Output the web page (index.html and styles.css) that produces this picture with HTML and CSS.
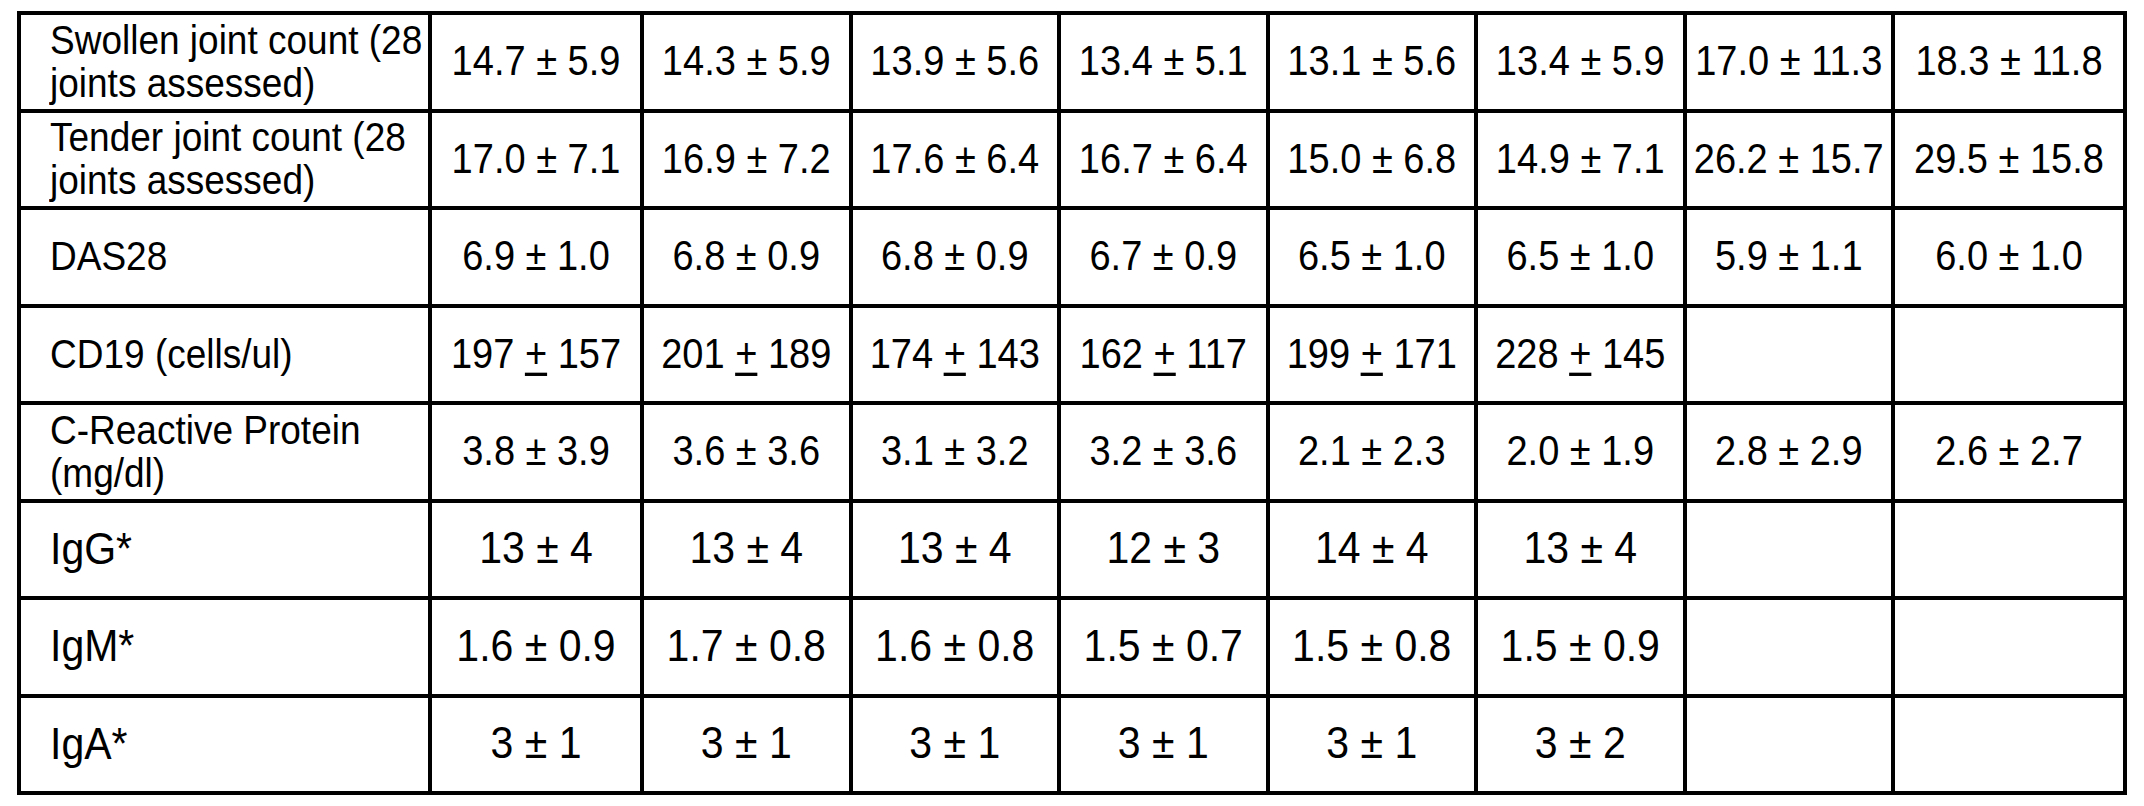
FILE: index.html
```html
<!DOCTYPE html>
<html>
<head>
<meta charset="utf-8">
<link rel="stylesheet" href="styles.css">
</head>
<body>
<div class="grid">
  <div class="cell label"><span class="t">Swollen joint count (28<br>joints assessed)</span></div>
  <div class="cell"><span class="t">14.7 ± 5.9</span></div>
  <div class="cell"><span class="t">14.3 ± 5.9</span></div>
  <div class="cell"><span class="t">13.9 ± 5.6</span></div>
  <div class="cell"><span class="t">13.4 ± 5.1</span></div>
  <div class="cell"><span class="t">13.1 ± 5.6</span></div>
  <div class="cell"><span class="t">13.4 ± 5.9</span></div>
  <div class="cell"><span class="t">17.0 ± 11.3</span></div>
  <div class="cell"><span class="t">18.3 ± 11.8</span></div>

  <div class="cell label"><span class="t">Tender joint count (28<br>joints assessed)</span></div>
  <div class="cell"><span class="t">17.0 ± 7.1</span></div>
  <div class="cell"><span class="t">16.9 ± 7.2</span></div>
  <div class="cell"><span class="t">17.6 ± 6.4</span></div>
  <div class="cell"><span class="t">16.7 ± 6.4</span></div>
  <div class="cell"><span class="t">15.0 ± 6.8</span></div>
  <div class="cell"><span class="t">14.9 ± 7.1</span></div>
  <div class="cell"><span class="t">26.2 ± 15.7</span></div>
  <div class="cell"><span class="t">29.5 ± 15.8</span></div>

  <div class="cell label"><span class="t">DAS28</span></div>
  <div class="cell"><span class="t">6.9 ± 1.0</span></div>
  <div class="cell"><span class="t">6.8 ± 0.9</span></div>
  <div class="cell"><span class="t">6.8 ± 0.9</span></div>
  <div class="cell"><span class="t">6.7 ± 0.9</span></div>
  <div class="cell"><span class="t">6.5 ± 1.0</span></div>
  <div class="cell"><span class="t">6.5 ± 1.0</span></div>
  <div class="cell"><span class="t">5.9 ± 1.1</span></div>
  <div class="cell"><span class="t">6.0 ± 1.0</span></div>

  <div class="cell label"><span class="t">CD19 (cells/ul)</span></div>
  <div class="cell"><span class="t">197 <span class="pm">+</span> 157</span></div>
  <div class="cell"><span class="t">201 <span class="pm">+</span> 189</span></div>
  <div class="cell"><span class="t">174 <span class="pm">+</span> 143</span></div>
  <div class="cell"><span class="t">162 <span class="pm">+</span> 117</span></div>
  <div class="cell"><span class="t">199 <span class="pm">+</span> 171</span></div>
  <div class="cell"><span class="t">228 <span class="pm">+</span> 145</span></div>
  <div class="cell"></div>
  <div class="cell"></div>

  <div class="cell label"><span class="t">C-Reactive Protein<br>(mg/dl)</span></div>
  <div class="cell"><span class="t">3.8 ± 3.9</span></div>
  <div class="cell"><span class="t">3.6 ± 3.6</span></div>
  <div class="cell"><span class="t">3.1 ± 3.2</span></div>
  <div class="cell"><span class="t">3.2 ± 3.6</span></div>
  <div class="cell"><span class="t">2.1 ± 2.3</span></div>
  <div class="cell"><span class="t">2.0 ± 1.9</span></div>
  <div class="cell"><span class="t">2.8 ± 2.9</span></div>
  <div class="cell"><span class="t">2.6 ± 2.7</span></div>

  <div class="cell label big"><span class="t">IgG*</span></div>
  <div class="cell big"><span class="t">13 ± 4</span></div>
  <div class="cell big"><span class="t">13 ± 4</span></div>
  <div class="cell big"><span class="t">13 ± 4</span></div>
  <div class="cell big"><span class="t">12 ± 3</span></div>
  <div class="cell big"><span class="t">14 ± 4</span></div>
  <div class="cell big"><span class="t">13 ± 4</span></div>
  <div class="cell"></div>
  <div class="cell"></div>

  <div class="cell label big"><span class="t">IgM*</span></div>
  <div class="cell big"><span class="t">1.6 ± 0.9</span></div>
  <div class="cell big"><span class="t">1.7 ± 0.8</span></div>
  <div class="cell big"><span class="t">1.6 ± 0.8</span></div>
  <div class="cell big"><span class="t">1.5 ± 0.7</span></div>
  <div class="cell big"><span class="t">1.5 ± 0.8</span></div>
  <div class="cell big"><span class="t">1.5 ± 0.9</span></div>
  <div class="cell"></div>
  <div class="cell"></div>

  <div class="cell label big"><span class="t">IgA*</span></div>
  <div class="cell big"><span class="t">3 ± 1</span></div>
  <div class="cell big"><span class="t">3 ± 1</span></div>
  <div class="cell big"><span class="t">3 ± 1</span></div>
  <div class="cell big"><span class="t">3 ± 1</span></div>
  <div class="cell big"><span class="t">3 ± 1</span></div>
  <div class="cell big"><span class="t">3 ± 2</span></div>
  <div class="cell"></div>
  <div class="cell"></div>
</div>
</body>
</html>
```

FILE: styles.css
```css
html, body {
  margin: 0;
  padding: 0;
  background: #fff;
}

body {
  padding: 11px 0 0 17px;
}

.grid {
  display: grid;
  grid-template-columns: 407px 208px repeat(6, 204.5px) 228px;
  grid-auto-rows: 93.5px;
  gap: 4px;
  padding: 4px;
  background: #000;
  width: max-content;
}

.cell {
  background: #fff;
  display: flex;
  align-items: center;
  justify-content: center;
  font-family: "Liberation Sans", Arial, sans-serif;
  font-size: 38px;
  color: #000;
  white-space: nowrap;
  line-height: 1.12;
}

.t {
  display: inline-block;
  transform: scaleY(1.1);
}

.label {
  justify-content: flex-start;
  padding-left: 29px;
  font-size: 37px;
  line-height: 1.06;
}

.label.big {
  font-size: 41px;
}

.big {
  font-size: 41px;
}

.pm {
  text-decoration: underline;
  text-decoration-thickness: 3px;
  text-underline-offset: 4px;
}
```
